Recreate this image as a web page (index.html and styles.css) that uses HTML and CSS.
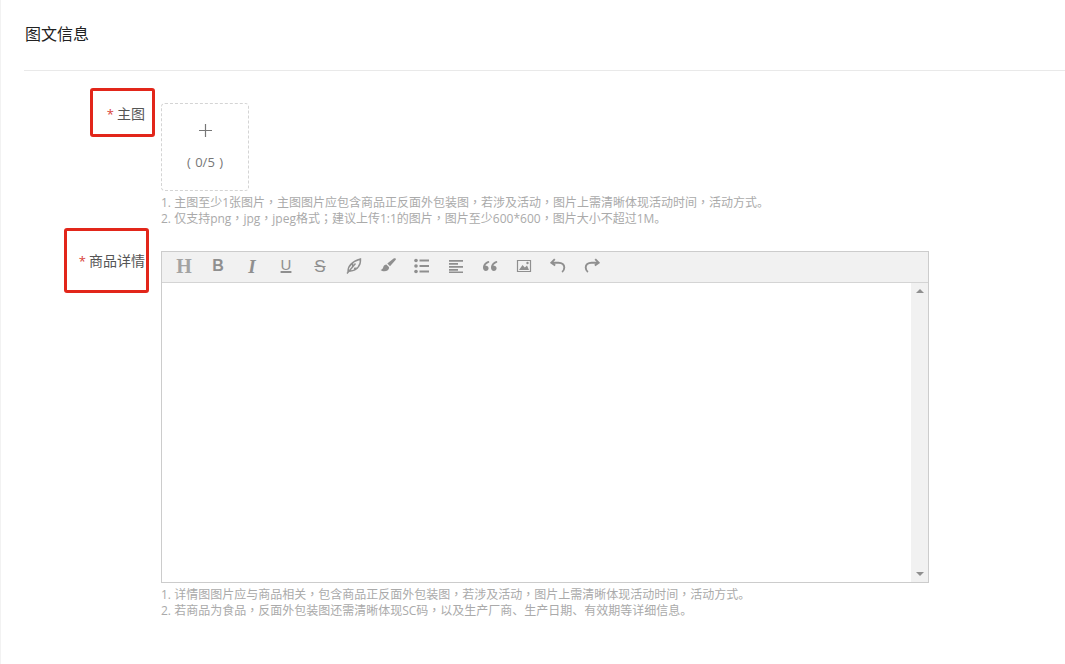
FILE: index.html
```html
<!DOCTYPE html>
<html lang="zh-CN">
<head>
<meta charset="utf-8">
<title>图文信息</title>
<link rel="stylesheet" href="styles.css">
</head>
<body>
<main class="page">
  <h2 class="section-title">图文信息</h2>
  <form class="form">
    <div class="row row-main">
      <label class="label"><span class="req">*</span>主图</label>
      <div class="field">
        <div class="upload">
          <svg class="plus" viewBox="0 0 13 13" width="13" height="13"><path d="M6.5 0v13M0 6.5h13"/></svg>
          <span class="count">( 0/5 )</span>
        </div>
        <p class="tips tips-main">1. 主图至少1张图片<i lang="zh-TW">，</i>主图图片应包含商品正反面外包装图<i lang="zh-TW">，</i>若涉及活动<i lang="zh-TW">，</i>图片上需清晰体现活动时间<i lang="zh-TW">，</i>活动方式。<br>2. 仅支持png<i lang="zh-TW">，</i>jpg<i lang="zh-TW">，</i>jpeg格式<i lang="zh-TW">；</i>建议上传1:1的图片<i lang="zh-TW">，</i>图片至少600*600<i lang="zh-TW">，</i>图片大小不超过1M。</p>
      </div>
      <span class="mark mark-main"></span>
    </div>
    <div class="row row-detail">
      <label class="label"><span class="req">*</span>商品详情</label>
      <div class="field">
        <div class="editor">
          <div class="toolbar">
            <span class="tool t-h">H</span>
            <span class="tool t-b">B</span>
            <span class="tool t-i">I</span>
            <span class="tool t-u">U</span>
            <span class="tool t-s">S</span>
            <span class="tool"><svg viewBox="0 0 16 16" width="16" height="16" class="ln"><path d="M2 13.500C2 8.500 6 3.500 14.500 1C15 7 11 12.500 4.500 13zM1 15.500 9.500 5.500M6.500 9.500l.2-4M8 10.500l4-.5"/></svg></span>
            <span class="tool"><svg viewBox="0 0 16 16" width="16" height="16" class="fl"><path d="M15.600.5c-.6-.5-1.300-.4-2 .1L7.300 5.600 10 8.300l5.300-6c.6-.7.800-1.300.3-1.800zM6.400 6.600c-1.500 0-2.800 1-3.100 2.500-.3 1.300-1 2.300-2.800 3 2 1.500 5.300 1.700 7.300.1 1.200-1 1.500-2.300 1.100-3.300z"/></svg></span>
            <span class="tool"><svg viewBox="0 0 16 16" width="16" height="16" class="fl"><circle cx="2" cy="2.500" r="1.800"/><circle cx="2" cy="8" r="1.800"/><circle cx="2" cy="13.500" r="1.800"/><path d="M5.500 1.500H15V3.500H5.500zM5.500 7H15V9H5.500zM5.500 12.500H15V14.500H5.500z"/></svg></span>
            <span class="tool"><svg viewBox="0 0 16 16" width="16" height="16" class="fl"><path d="M1 2h14v1.700H1zM1 5h9v1.700H1zM1 8h14v1.700H1zM1 11h9v1.700H1zM1 13.600h14v1.400H1z"/></svg></span>
            <span class="tool"><svg viewBox="0 0 16 16" width="16" height="16" class="fl"><path d="M7 3C3.500 3.800 1 6 1 9.800 1 11.800 2.200 13 3.800 13s2.800-1.200 2.800-2.700-1.100-2.600-2.500-2.600c-.3 0-.5 0-.7.100C3.700 6.500 5.200 5.200 7.300 4.500zM15 3c-3.500.8-6 3-6 6.800C9 11.800 10.200 13 11.800 13s2.800-1.200 2.800-2.700-1.100-2.600-2.500-2.600c-.3 0-.5 0-.7.100.3-1.300 1.800-2.600 3.900-3.300z"/></svg></span>
            <span class="tool"><svg viewBox="0 0 16 16" width="16" height="16"><path class="frame" d="M1.500 2.500h13v11h-13z"/><path class="fl" d="M3 12l3.500-5 2.300 2.500L11 7.500l2 4.500z"/><circle class="fl" cx="11.500" cy="5" r="1.200"/></svg></span>
            <span class="tool"><svg viewBox="0 0 16 16" width="16" height="16" class="undo"><path d="M4.800 1.200 1.300 4.700l3.900 2.900M1.800 4.700H8.500c3.500 0 5.800 2 5.800 4.800 0 1.900-.8 3.400-2.200 4.500"/></svg></span>
            <span class="tool"><svg viewBox="0 0 16 16" width="16" height="16" class="undo"><path d="M11.200 1.200 14.700 4.700l-3.900 2.900M14.200 4.700H7.500C4 4.700 1.700 6.700 1.700 9.500c0 1.900.8 3.400 2.200 4.500"/></svg></span>
          </div>
          <div class="editor-body">
            <div class="content"></div>
            <div class="scrollbar">
              <span class="arrow arrow-up"></span>
              <span class="arrow arrow-down"></span>
            </div>
          </div>
        </div>
        <p class="tips tips-detail">1. 详情图图片应与商品相关<i lang="zh-TW">，</i>包含商品正反面外包装图<i lang="zh-TW">，</i>若涉及活动<i lang="zh-TW">，</i>图片上需清晰体现活动时间<i lang="zh-TW">，</i>活动方式。<br>2. 若商品为食品<i lang="zh-TW">，</i>反面外包装图还需清晰体现SC码<i lang="zh-TW">，</i>以及生产厂商、生产日期、有效期等详细信息。</p>
      </div>
      <span class="mark mark-detail"></span>
    </div>
  </form>
</main>
</body>
</html>
```

FILE: styles.css
```css
* { box-sizing: border-box; }
html, body { margin: 0; padding: 0; height: 100%; overflow: hidden; background: #fff; }
body { font-family: "Open Sans", "Noto Sans CJK SC", sans-serif; color: #333; }
.page { height: 664px; border-left: 1px solid #f2f2f2; padding-left: 23px; }
.section-title {
  margin: 0; height: 71px; padding-top: 22px; padding-left: 1px;
  font-size: 16px; line-height: 22px; font-weight: 400; color: #222;
  font-family: "Noto Sans CJK SC", sans-serif;
  border-bottom: 1px solid #e9e9e9;
}
.form { padding-top: 32px; }
.row { position: relative; display: flex; align-items: flex-start; }
.row-detail { margin-top: 24px; }
.label {
  width: 121px; flex: none; text-align: right;
  font-size: 14px; line-height: 20px; color: #555;
  font-family: "Noto Sans CJK SC", sans-serif;
}
.row-detail .label { line-height: 18px; }
.req { color: #d9423a; margin-right: 3px; font-size: 13px; font-family: "Open Sans", sans-serif; }
.field { margin-left: 16px; width: 768px; flex: none; }
.upload {
  width: 88px; height: 88px; border: 1px dashed #d4d4d4; border-radius: 4px;
  display: flex; flex-direction: column; align-items: center;
}
.plus { margin-top: 20px; stroke: #777; stroke-width: 1.2; fill: none; }
.count { margin-top: 16px; font-size: 13px; line-height: 18px; color: #777; word-spacing: 1px; }
.tips {
  margin: 4px 0 0; font-size: 12px; line-height: 16px; color: #aaa;
  white-space: nowrap;
  font-family: "Open Sans", "Noto Sans CJK SC", sans-serif;
}
.tips i { font-style: normal; line-height: 0; font-family: "Noto Sans CJK TC", sans-serif; }
.editor { width: 768px; height: 332px; border: 1px solid #ccc; display: flex; flex-direction: column; }
.toolbar {
  flex: none; height: 31px; background: #f1f1f1; border-bottom: 1px solid #d4d4d4;
  display: flex; align-items: center; padding: 0 0 2px 5px;
}
.tool {
  width: 34px; height: 28px; flex: none;
  display: flex; align-items: center; justify-content: center;
  color: #8f8f8f; font-size: 16px; line-height: 1;
}
.t-h { font-family: "Liberation Serif", serif; font-size: 20px; font-weight: 700; color: #a3a3a3; }
.t-b { font-family: "Liberation Sans", sans-serif; font-weight: 700; font-size: 16px; }
.t-i { font-family: "Liberation Serif", serif; font-style: italic; font-weight: 700; font-size: 19px; }
.t-u { font-family: "Liberation Sans", sans-serif; font-size: 15px; padding-bottom: 3px; text-decoration: underline; text-underline-offset: 1px; text-decoration-thickness: 1.5px; }
.t-s { font-family: "Liberation Sans", sans-serif; font-size: 17px; text-decoration: line-through; }
.ln, .undo { fill: none; stroke: #8f8f8f; stroke-width: 1.4; }
.undo { stroke-width: 1.9; }
.fl { fill: #8f8f8f; }
.frame { fill: none; stroke: #8f8f8f; stroke-width: 1.2; }
.editor-body { flex: 1; display: flex; }
.content { flex: 1; background: #fff; }
.scrollbar {
  width: 17px; flex: none; background: #f1f1f1;
  display: flex; flex-direction: column; justify-content: space-between; align-items: center;
  padding: 6px 0;
}
.arrow { width: 0; height: 0; border-left: 4px solid transparent; border-right: 4px solid transparent; }
.arrow-up { border-bottom: 4px solid #8f8f8f; }
.arrow-down { border-top: 4px solid #8f8f8f; }
.mark { position: absolute; border: 3px solid #e2261a; border-radius: 3px; pointer-events: none; }
.mark-main { left: 66px; top: -15px; width: 65px; height: 49px; }
.mark-detail { left: 40px; top: -23px; width: 85px; height: 65px; }
```
